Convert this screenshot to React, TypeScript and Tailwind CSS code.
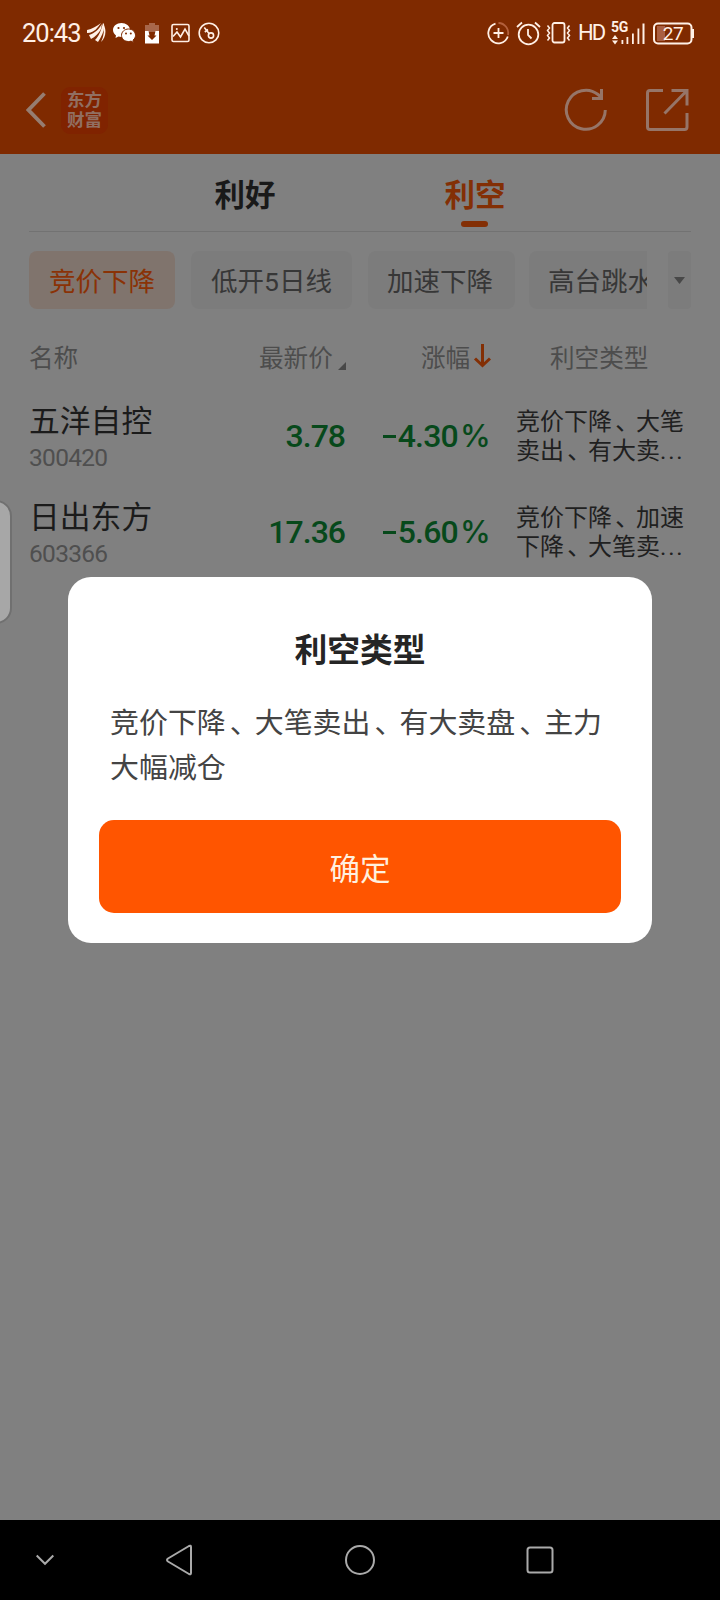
import type { ReactNode } from "react";

const stocks = [
  { name: "五洋自控", code: "300420", price: "3.78", change: "4.30", lines: ["竞价下降、大笔", "卖出、有大卖..."] },
  { name: "日出东方", code: "603366", price: "17.36", change: "5.60", lines: ["竞价下降、加速", "下降、大笔卖..."] },
];

function Cjk({ text }: { text: string }) {
  const parts: ReactNode[] = [];
  text.split("、").forEach((p, i) => {
    if (i > 0) parts.push(<span key={"s" + i} className="ml-[0.14em] -mr-[0.14em]">、</span>);
    if (p.endsWith("...")) {
      parts.push(p.slice(0, -3), <span key={"e" + i} className="tracking-[1.8px]">...</span>);
    } else parts.push(p);
  });
  return <>{parts}</>;
}

function StatusBar() {
  return (
    <div className="flex h-[66px] shrink-0 items-center pl-[22px] pr-[26px] text-[#fff0e6]">
      <span className="w-[65px] pt-0.5 font-['Roboto'] text-[25.5px] leading-none tracking-[-1px]">20:43</span>
      <svg className="h-[22px] w-[19px] shrink-0" viewBox="0 0 19 22" fill="currentColor">
        <path d="M0 8C5 7 10 4 14 1L11 5C8 9 4 11 0 11ZM2 13C8 11 12 7 15 2L14 7C12 11 8 15 4 17ZM8 18C12 14 14 9 16 1L17 2C18 8 15 14 11 20ZM14 20C17 14 17 9 17 3C20 10 18 16 14 20Z" />
      </svg>
      <svg className="ml-[7px] h-[22px] w-[23px] shrink-0" viewBox="0 0 23 22">
        <path fill="#fff" d="M8.500 1C3.600 1 0 4.100 0 8c0 2.200 1.200 4.100 3 5.400L2.500 16l3-1.500c1 .3 2 .4 3 .4C13 15 17 12 17 8S13 1 8.500 1Z" />
        <path fill="#fff" stroke="#7f2a00" strokeWidth="1" d="M15.500 7C11.500 7 8.500 9.900 8.500 13.300S11.500 19.500 15.500 19.500c.9 0 1.700-.1 2.500-.4l2.600 1.300-.6-2.300c1.600-1.100 2.500-2.800 2.500-4.800C22.500 9.900 19.500 7 15.500 7Z" />
        <g fill="#7f2a00">
          <circle cx="5.500" cy="6" r="1.100" /><circle cx="11" cy="6" r="1.100" />
          <circle cx="13" cy="11.500" r="1" /><circle cx="17.800" cy="11.500" r="1" />
        </g>
      </svg>
      <svg className="ml-[9px] h-[22px] w-[14px] shrink-0" viewBox="0 0 14 22">
        <path fill="#a8674a" d="M4 1h6v2h4v7H0V3h4Z" />
        <path fill="#fff" d="M0 9h3.500l1 4.500H2.500L7 18l4.500-4.500H9.500l1-4.500H14v12.500H0Z" />
      </svg>
      <svg className="ml-[12px] h-[22px] w-[19px] shrink-0" viewBox="0 0 19 22" fill="none" stroke="currentColor" strokeWidth="1.600">
        <rect x="1" y="2.500" width="17" height="17" rx="1.500" />
        <path d="M2 14.500 6 10l3.500 5 4.500-8 4 7" />
        <circle cx="5.800" cy="7" r="1" fill="currentColor" stroke="none" />
      </svg>
      <svg className="ml-[8px] h-[22px] w-[22px] shrink-0" viewBox="0 0 22 22" fill="none" stroke="currentColor" strokeWidth="1.600">
        <circle cx="11" cy="11" r="9.800" />
        <circle cx="13" cy="13.500" r="2.600" />
        <path d="M11.200 11.700 6.300 5.500M6.800 10 10 7.500" />
      </svg>
      <div className="flex-1" />
      <svg className="h-[24px] w-[23px] shrink-0" viewBox="0 0 23 24" fill="none" stroke="currentColor" strokeWidth="1.800">
        <path d="M8.500 2.700A10 10 0 1 0 20.800 15.500" />
        <path stroke="#b3603c" d="M11.500 2A10 10 0 0 1 21 14" />
        <path d="M11.500 7v10M6.500 12h10" />
      </svg>
      <svg className="ml-[6px] h-[26px] w-[25px] shrink-0" viewBox="0 0 25 26" fill="none" stroke="currentColor" strokeWidth="1.800">
        <circle cx="12.500" cy="14.500" r="9.800" />
        <path d="M12 9v6l3.500 3.500M1 7 6 2.500M24 7 19 2.500" />
      </svg>
      <svg className="ml-[5px] h-[24px] w-[25px] shrink-0" viewBox="0 0 25 24" fill="none" stroke="currentColor">
        <rect x="6.500" y="2" width="12" height="19.500" rx="2" strokeWidth="1.800" />
        <path strokeWidth="1.500" d="M1.500 4.500 3.500 7 1.500 9.500l2 2.500-2 2.500 2 2.500-2 2.500M23.500 4.500 21.500 7l2 2.500-2 2.500 2 2.500-2 2.500 2 2.500" />
      </svg>
      <span className="ml-[7px] w-[28px] font-['Roboto'] text-[22px] leading-none tracking-[-2px]">HD</span>
      <div className="relative ml-[5px] h-[24px] w-[36px] shrink-0">
        <span className="absolute -top-[1px] left-0 font-['Roboto'] text-[14px] font-bold leading-none tracking-[-0.3px]">5G</span>
        <svg className="h-[24px] w-[36px]" viewBox="0 0 36 24" fill="currentColor">
          <path d="M1 18 4 14l3 4ZM1 19.500l3 4 3-4ZM10.500 19h1.800v4h-1.800ZM15.500 16h1.800v7h-1.800ZM21 12.500h1.800V23H21ZM26.500 7.500h1.800V23h-1.800ZM31.500 2.500h2V23h-2Z" />
        </svg>
      </div>
      <div className="relative ml-[6px] h-[23px] w-[41px] shrink-0">
        <svg className="h-[23px] w-[41px]" viewBox="0 0 41 23" fill="none">
          <path fill="#a95f42" d="M4 4h8v15H4Z" />
          <rect x="1" y="1.500" width="37.500" height="20" rx="4" stroke="currentColor" strokeWidth="2" />
          <path fill="currentColor" d="M38 7h3v9h-3Z" />
        </svg>
        <span className="absolute inset-0 flex items-center justify-center pr-px font-['Roboto'] text-[19px] leading-none tracking-[-0.5px]">27</span>
      </div>
    </div>
  );
}

function Header() {
  return (
    <div className="flex h-[88px] shrink-0 items-center pl-[26px] pr-[31px]">
      <svg className="h-[36px] w-[21px]" viewBox="0 0 21 36" fill="none" stroke="#967d71" strokeWidth="3.800">
        <path d="M18.500 1.500 2.500 18l16 16.500" />
      </svg>
      <div className="ml-[14px] flex h-[47px] w-[47px] flex-col items-center justify-center rounded-[9px] bg-[#802300] pb-0.5 font-['Noto_Sans_CJK_SC',sans-serif] text-[17.5px] font-bold text-[#916f62]">
        <span className="flex h-[20px] items-center leading-none">东方</span>
        <span className="flex h-[20px] items-center leading-none">财富</span>
      </div>
      <div className="flex-1" />
      <svg className="h-[44px] w-[44px]" viewBox="0 0 44 44" fill="none" stroke="#967568" strokeWidth="3">
        <path d="M41.300 22A19.500 19.500 0 1 1 34 6.500L37 9" />
        <path d="M37.500 1v9.500H28" />
      </svg>
      <svg className="ml-[37px] h-[44px] w-[44px]" viewBox="0 0 44 44" fill="none" stroke="#967568" strokeWidth="3">
        <path d="M18 2.500H5Q2.500 2.500 2.500 5V39q0 2.500 2.500 2.500H39.500q2.500 0 2.500-2.500V25" />
        <path d="M26.500 2.500H42V17.500M42 2.500 19.500 25.500" />
      </svg>
    </div>
  );
}

export default function App() {
  const chip = "flex h-[58px] shrink-0 items-center justify-center rounded-lg bg-[#7c7c7c] pt-[3px] text-[26.500px] text-[#373737]";
  return (
    <div className="relative flex h-[1600px] w-[720px] flex-col overflow-hidden bg-[#808080] font-['Roboto','Noto_Sans_CJK_SC',sans-serif]">
      <div className="flex flex-col bg-[#7f2a00]">
        <StatusBar />
        <Header />
      </div>

      <div className="mx-[29px] flex h-[78px] justify-center gap-[168px] border-b border-[#727272] text-[30.500px] font-bold">
        <div className="flex w-[62px] flex-col items-center pt-[19px] text-[#191919]">
          <span className="leading-[46px]">利好</span>
        </div>
        <div className="flex w-[62px] flex-col items-center pt-[19px] text-[#832f05]">
          <span className="leading-[46px]">利空</span>
          <span className="mr-0.5 mt-0.5 h-[6px] w-[27px] shrink-0 rounded-full bg-[#832f05]" />
        </div>
      </div>

      <div className="mx-[29px] mt-[19px] flex">
        <div className="flex w-[618px] gap-[16px] overflow-hidden">
          <div className="flex h-[58px] w-[146px] shrink-0 items-center justify-center rounded-lg bg-[#80746d] pt-[3px] text-[26.500px] text-[#8a3206]">竞价下降</div>
          <div className={chip + " w-[161px]"}>低开5日线</div>
          <div className={chip + " w-[147px] pr-[3px]"}>加速下降</div>
          <div className={chip + " -ml-0.5 w-[147px] pr-[3px]"}>高台跳水</div>
        </div>
        <div className="ml-[21px] flex h-[58px] w-[23px] items-center justify-center rounded bg-[#7c7c7c]">
          <svg className="h-[7px] w-[11px]" viewBox="0 0 11 7" fill="#484848"><path d="M0 0h11L5.500 7Z" /></svg>
        </div>
      </div>

      <div className="mt-[30px] flex h-[38px] items-center pl-[29px] text-[24.600px] leading-none text-[#4d4d4d]">
        <span className="w-[230px] pt-[3px]">名称</span>
        <span className="w-[79px] pt-[3px]">最新价</span>
        <svg className="mt-[15px] h-[8px] w-[8px]" viewBox="0 0 8 8" fill="#484848"><path d="M8 0v8H0Z" /></svg>
        <span className="ml-[75px] w-[52px] pt-[3px]">涨幅</span>
        <svg className="-mt-1 h-[24px] w-[18px]" viewBox="0 0 18 24" fill="none" stroke="#832f05" strokeWidth="3">
          <path d="M9.500 0v21M2 14.500l7.500 7 7.500-7" />
        </svg>
        <span className="ml-[59px] pt-[3px]">利空类型</span>
      </div>

      <div className="mt-[11px] flex flex-col">
        {stocks.map((s) => (
          <div key={s.code} className="flex h-24 items-center pl-[29px]">
            <div className="flex w-[200px] flex-col">
              <span className="pt-[3px] text-[30.800px] leading-[40px] text-[#1b1b1b]">{s.name}</span>
              <span className="text-[24.500px] leading-[32px] tracking-[-0.700px] text-[#4f4f4f]">{s.code}</span>
            </div>
            <span className="w-[116px] text-right text-[32px] font-medium tracking-[-1px] text-[#07491b]">{s.price}</span>
            <span className="flex w-[145px] items-center justify-end text-[32px] font-medium tracking-[-0.800px] text-[#07491b]">
              <i className="mr-[2px] h-[3px] w-[13px] bg-[#07491b]" />
              <span>{s.change}<span className="ml-0.5 font-['Inter'] text-[31px]">%</span></span>
            </span>
            <span className="ml-[26px] flex flex-col whitespace-nowrap pt-px text-[24px] leading-[28.500px] text-[#202020]">
              {s.lines.map((l) => <span key={l}><Cjk text={l} /></span>)}
            </span>
          </div>
        ))}
      </div>

      <div className="absolute -left-5 top-[500px] h-[124px] w-[32px] rounded-[18px] border-2 border-[#707070] bg-[#a7a7a7]" />

      <div className="absolute inset-x-0 bottom-20 top-0 flex items-center justify-center">
        <div className="flex h-[366px] w-[584px] flex-col rounded-[23px] bg-white px-[31px]">
          <h2 className="mt-[50px] text-center text-[32.800px] font-bold leading-[48px] text-[#252525]">利空类型</h2>
          <p className="ml-[11px] mt-[26px] w-[500px] whitespace-nowrap text-[28.950px] leading-[45px] text-[#444]">
            <Cjk text="竞价下降、大笔卖出、有大卖盘、主力" /><br />大幅减仓
          </p>
          <button className="mt-[29px] h-[93px] rounded-[15px] bg-[#ff5500] pt-1.5 text-[30.500px] text-[#fff0df]">确定</button>
        </div>
      </div>

      <div className="mt-auto flex h-20 shrink-0 items-center bg-black pl-[36px]">
        <svg className="h-[12px] w-[18px]" viewBox="0 0 18 12" fill="none" stroke="#aaa" strokeWidth="2"><path d="m.7 1.500 8.300 8.300 8.300-8.300" /></svg>
        <svg className="ml-[111px] h-[32px] w-[28px]" viewBox="0 0 28 32" fill="none" stroke="#aaa" strokeWidth="2" strokeLinejoin="round"><path d="M24 2Q26 1 26 3V29Q26 31 24 30L3 17.500Q1 16 3 14.500Z" /></svg>
        <svg className="ml-[151px] h-[32px] w-[32px]" viewBox="0 0 32 32" fill="none" stroke="#aaa" strokeWidth="2"><circle cx="16" cy="16" r="14" /></svg>
        <svg className="ml-[150px] h-[28px] w-[28px]" viewBox="0 0 28 28" fill="none" stroke="#aaa" strokeWidth="2"><rect x="1.500" y="1.500" width="25" height="25" rx="2.500" /></svg>
      </div>
    </div>
  );
}
